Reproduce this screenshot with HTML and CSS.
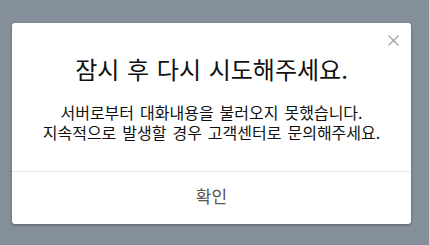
FILE: index.html
```
<!DOCTYPE html>
<html lang="ko">
<head>
<meta charset="utf-8">
<link rel="stylesheet" href="styles.css">
</head>
<body>
<div class="dialog">
  <button class="close" aria-label="닫기">
    <svg width="11" height="11" viewBox="0 0 11 11"><path d="M0.5 0.5 L10.5 10.5 M10.5 0.5 L0.5 10.5" stroke="#a3a3a3" stroke-width="1.4" fill="none"/></svg>
  </button>
  <div class="content">
    <h1 class="title">잠시 후 다시 시도해주세요.</h1>
    <p class="message">서버로부터 대화내용을 불러오지 못했습니다.<br>지속적으로 발생할 경우 고객센터로 문의해주세요.</p>
  </div>
  <div class="footer">
    <button class="confirm">확인</button>
  </div>
</div>
</body>
</html>
```
FILE: styles.css
```
html, body {
  margin: 0;
  padding: 0;
  background: #848f99;
  font-family: "Noto Sans CJK KR", "Noto Sans", sans-serif;
}
body {
  width: 429px;
  height: 245px;
  overflow: hidden;
  padding-top: 23px;
  padding-left: 12px;
  box-sizing: border-box;
}
.dialog {
  position: relative;
  width: 399px;
  height: 201px;
  background: #fff;
  border-radius: 3px;
  box-shadow: 0 1px 3px rgba(0, 0, 0, 0.35);
  display: flex;
  flex-direction: column;
}
.close {
  position: absolute;
  top: 12px;
  right: 12px;
  width: 11px;
  height: 11px;
  padding: 0;
  margin: 0;
  border: 0;
  background: none;
  display: block;
}
.close svg { display: block; }
.content {
  height: 148px;
  box-sizing: border-box;
  padding-top: 31px;
  text-align: center;
  color: #111;
}
.title {
  margin: 0;
  font-size: 24px;
  line-height: 30px;
  font-weight: 400;
  word-spacing: 1px;
  white-space: nowrap;
}
.message {
  margin: 18px 0 0;
  font-size: 16px;
  line-height: 20px;
  word-spacing: 1.5px;
  white-space: nowrap;
}
.footer {
  border-top: 1px solid #e6e6e6;
  height: 52px;
  box-sizing: border-box;
  padding-bottom: 4px;
}
.confirm {
  display: block;
  width: 100%;
  height: 47px;
  padding: 0;
  border: 0;
  background: none;
  font-family: inherit;
  font-size: 17px;
  line-height: 47px;
  color: #555;
}
```
